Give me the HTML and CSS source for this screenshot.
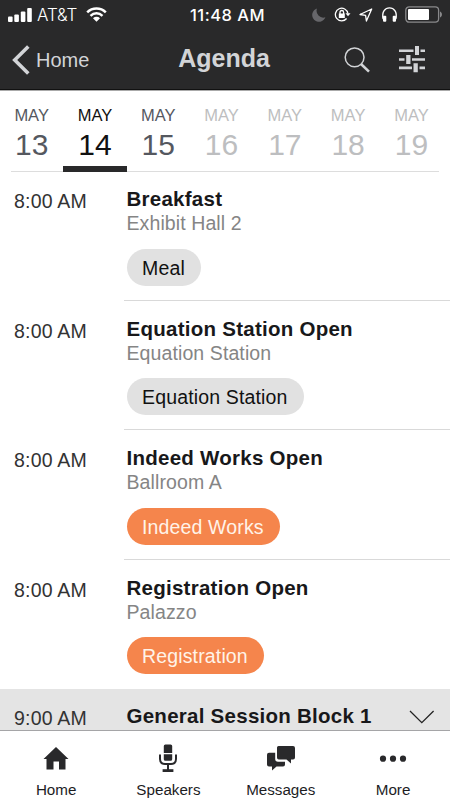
FILE: index.html
```
<!DOCTYPE html>
<html lang="en">
<head>
<meta charset="utf-8">
<title>Agenda</title>
<link rel="stylesheet" href="styles.css">
</head>
<body>
<div class="app">
  <header class="header">
    <div class="status">
      <div class="carrier">
        <svg width="25" height="14" viewBox="0 0 25 14" fill="#fff"><rect x="0" y="8.5" width="4.6" height="5.5" rx="1"/><rect x="6.3" y="6.5" width="4.6" height="7.5" rx="1"/><rect x="12.8" y="3.5" width="4.6" height="10.5" rx="1"/><rect x="19.2" y="0" width="4.6" height="14" rx="1"/></svg>
        <span class="carrier-name">AT&amp;T</span>
        <svg class="wifi" width="21" height="15" viewBox="0 0 21 15" fill="none" stroke="#fff" stroke-width="2.5"><path d="M1.2 5.3C6.4.2 14.6.2 19.8 5.3M4.5 8.8C8 5.5 13 5.5 16.5 8.8"/><path d="M7 11.2C9 9.4 12 9.4 14 11.2L10.5 14.8Z" fill="#fff" stroke="none"/></svg>
      </div>
      <span class="clock">11:48 AM</span>
      <div class="indicators">
        <svg width="14" height="14" viewBox="0 0 14 14" fill="#66666a"><path d="M5 .5A6.8 6.8 0 1 0 13.4 9.3A6.8 6.8 0 0 1 5 .5Z"/></svg>
        <svg class="lock" width="17" height="15" viewBox="0 0 17 15" fill="none" stroke="#fff" stroke-width="1.3"><path d="M12.6 11.5A6.3 6.3 0 1 1 13.9 6.5"/><path d="M11.5 6.2H16.5L14 9.2Z" fill="#fff" stroke="none"/><rect x="4.8" y="6.5" width="6" height="4.5" fill="#fff" stroke="none"/><path d="M6 7V5.3A1.8 1.8 0 0 1 9.6 5.3V7"/></svg>
        <svg class="location" width="14" height="14" viewBox="0 0 14 14" fill="none" stroke="#fff" stroke-width="1.3" stroke-linejoin="round"><path d="M12.7 1L1 6.5L6.6 7.4L7.4 13Z"/></svg>
        <svg class="headphones" width="17" height="15" viewBox="0 0 17 15"><path d="M2.2 12C-1.5-2.8 18.5-2.8 14.8 12" fill="none" stroke="#fff" stroke-width="1.4"/><rect x="2" y="8.7" width="3.3" height="6" rx="1" fill="#fff"/><rect x="11.7" y="8.7" width="3.3" height="6" rx="1" fill="#fff"/></svg>
        <svg class="battery" width="38" height="17" viewBox="0 0 38 17"><rect x=".8" y=".8" width="32.8" height="15.4" rx="3.4" fill="none" stroke="#89898b" stroke-width="1.3"/><rect x="3" y="3" width="21" height="11" rx="1" fill="#fff"/><path d="M35 5.5C37.6 6.3 37.6 10.7 35 11.5Z" fill="#89898b"/></svg>
      </div>
    </div>
    <nav class="navbar">
      <a class="back">
        <svg width="18" height="30" viewBox="0 0 18 30" fill="none" stroke="#d2d4d7" stroke-width="3.6"><path d="M16.3 1.5L2.7 15L16.3 28.5"/></svg>
        <span>Home</span>
      </a>
      <h1 class="title">Agenda</h1>
      <div class="actions">
        <svg width="26" height="26" viewBox="0 0 26 26" fill="none" stroke="#d2d4d7"><circle cx="10.6" cy="10.3" r="9.4" stroke-width="1.5"/><path d="M17 17L25 24.6" stroke-width="2.6"/></svg>
        <svg width="27" height="27" viewBox="0 0 27 27" fill="#d2d4d7"><path d="M0 3.4H14.5V6H0ZM21.5 3.4H26V6H21.5ZM16 0H20V9H16ZM0 12.2H5.5V14.8H0ZM13 12.2H26V14.8H13ZM7.2 9H11.5V18H7.2ZM0 20.6H13V23.2H0ZM20.5 20.6H26V23.2H20.5ZM14.5 17.3H18.8V26.2H14.5Z"/></svg>
      </div>
    </nav>
  </header>

  <section class="days">
    <div class="day"><span class="month">MAY</span><span class="date">13</span></div>
    <div class="day selected"><span class="month">MAY</span><span class="date">14</span></div>
    <div class="day"><span class="month">MAY</span><span class="date">15</span></div>
    <div class="day off"><span class="month">MAY</span><span class="date">16</span></div>
    <div class="day off"><span class="month">MAY</span><span class="date">17</span></div>
    <div class="day off"><span class="month">MAY</span><span class="date">18</span></div>
    <div class="day off"><span class="month">MAY</span><span class="date">19</span></div>
  </section>

  <main class="agenda">
    <article class="session">
      <time>8:00 AM</time>
      <div class="details"><h2>Breakfast</h2><p>Exhibit Hall 2</p><span class="tag">Meal</span></div>
    </article>
    <article class="session">
      <time>8:00 AM</time>
      <div class="details"><h2>Equation Station Open</h2><p>Equation Station</p><span class="tag">Equation Station</span></div>
    </article>
    <article class="session">
      <time>8:00 AM</time>
      <div class="details"><h2>Indeed Works Open</h2><p>Ballroom A</p><span class="tag orange">Indeed Works</span></div>
    </article>
    <article class="session">
      <time>8:00 AM</time>
      <div class="details"><h2>Registration Open</h2><p>Palazzo</p><span class="tag orange">Registration</span></div>
    </article>
    <article class="session block">
      <time>9:00 AM</time>
      <div class="details"><h2>General Session Block 1</h2></div>
      <svg class="chevron" width="26" height="14" viewBox="0 0 26 14" fill="none" stroke="#222" stroke-width="1.3"><path d="M1 1L12.8 12.7L24.6 1"/></svg>
    </article>
  </main>

  <footer class="tabs">
    <a class="tab">
      <svg width="26" height="30" viewBox="0 0 26 30" fill="#29292b"><path d="M13 4L25.5 16H22.5V26.5H16V18.5H10.5V26.5H3.5V16H.5Z"/></svg>
      <span>Home</span>
    </a>
    <a class="tab">
      <svg width="20" height="30" viewBox="0 0 20 30"><path d="M5.8 3Q5.8 1.4 7.4 1.4H12.6Q14.2 1.4 14.2 3V10H5.8ZM5.8 11.2H14.2V16.3Q14.2 17.8 12.6 17.8H7.4Q5.8 17.8 5.8 16.3Z" fill="#29292b"/><path d="M2 11.5V16Q2 20.9 7 20.9H13Q18 20.9 18 16V11.5M10 21V27.5" fill="none" stroke="#29292b" stroke-width="2"/><path d="M4.6 26.2H15.4V29H4.6Z" fill="#29292b"/></svg>
      <span>Speakers</span>
    </a>
    <a class="tab">
      <svg width="30" height="30" viewBox="0 0 30 30" fill="#29292b"><path d="M12.5 3H27Q29 3 29 5V14.5Q29 16.5 27 16.5H25V20.5L20.5 16.5H12.8Q11 16.5 11 14.5V4.5Q11 3 12.5 3ZM3 9.8H9.2V16Q9.2 18.7 12 18.7H19V21.5Q19 23.5 17 23.5H10.5L6 27.5V23.5H3Q1 23.5 1 21.5V11.8Q1 9.8 3 9.8Z"/></svg>
      <span>Messages</span>
    </a>
    <a class="tab">
      <svg width="28" height="30" viewBox="0 0 28 30" fill="#29292b"><circle cx="4" cy="15.7" r="3.1"/><circle cx="14" cy="15.7" r="3.1"/><circle cx="24" cy="15.7" r="3.1"/></svg>
      <span>More</span>
    </a>
  </footer>
</div>
</body>
</html>
```

FILE: styles.css
```
* { box-sizing: border-box; margin: 0; padding: 0; }
svg { display: block; flex: none; }
body { font-family: "Liberation Sans", Arial, sans-serif; background: #fff; overflow: hidden; }
.app { width: 450px; height: 800px; display: flex; flex-direction: column; overflow: hidden; }

.header { height: 91px; flex: none; background: #29292a; border-bottom: 1px solid #aaa; box-shadow: inset 0 -1px #111; }
.status { height: 29px; display: grid; grid-template-columns: 170px 1fr 170px; align-items: center; color: #fff; font-family: Inter, sans-serif; }
.carrier { display: flex; align-items: center; padding-left: 8px; }
.carrier-name { font-size: 17px; font-weight: 300; margin-left: 4px; width: 41px; letter-spacing: -.1px; white-space: nowrap; }
.wifi { margin-left: 8px; }
.clock { font-size: 16.5px; font-weight: 500; text-align: center; letter-spacing: .5px; padding-left: 5px; white-space: nowrap; }
.indicators { display: flex; align-items: center; justify-content: flex-end; padding-right: 7px; }
.indicators svg:first-child { margin-left: 0; }
.lock { margin-left: 8px; }
.location { margin-left: 8px; }
.headphones { margin-left: 8px; }
.battery { margin-left: 7px; }

.navbar { height: 61px; display: grid; grid-template-columns: 150px 1fr 150px; align-items: center; color: #d2d4d7; }
.back { display: flex; align-items: center; gap: 6px; padding-left: 12px; font-size: 20px; }
.back span { padding-top: 2px; }
.title { font-size: 25px; font-weight: bold; text-align: center; margin: -2px 2px 0 0; }
.actions { display: flex; align-items: center; justify-content: flex-end; gap: 29px; padding-right: 24px; }

.days { height: 81px; flex: none; display: grid; grid-template-columns: repeat(7, 63.3px); position: relative; }
.days::after { content: ""; position: absolute; left: 11px; right: 11px; bottom: 0; height: 1px; background: #ddd; z-index: -1; }
.day { display: flex; flex-direction: column; align-items: center; color: #55585f; padding-top: 13.5px; }
.month { font-size: 16.5px; line-height: 20px; }
.date { font-size: 30px; line-height: 39px; }
.selected { color: #111; border-bottom: 6px solid #29292a; }
.off { color: #bdbec0; }

.agenda { flex: 1; overflow: hidden; margin-top: -1px; }
.session { height: 129.5px; display: flex; padding-top: 16px; }
time { width: 124px; flex: none; padding-left: 14px; padding-top: 2px; font-size: 19.5px; line-height: 24px; letter-spacing: .2px; color: #333; }
.details { flex: 1; height: 113.5px; padding-left: 2.5px; border-bottom: 1px solid #d9d9d9; }
h2 { font-size: 20.5px; line-height: 24px; letter-spacing: .26px; color: #18181a; white-space: nowrap; }
p { font-size: 19.5px; line-height: 24px; letter-spacing: .1px; color: #858585; }
.tag { display: inline-block; margin-top: 13.5px; height: 37px; border-radius: 18.5px; padding: 0 16px 0 15.5px; font-size: 19.5px; line-height: 38px; letter-spacing: .15px; color: #111; background: #e1e1e1; }
.orange { background: #f5854c; color: #fff3e8; }
.session:nth-child(4) .details { border-bottom: 0; }
.block { background: #e4e4e4; padding-top: 15px; }
.block .details { border: 0; }
.chevron { margin: 6px 15px 0 0; }

.tabs { height: 70px; flex: none; display: grid; grid-template-columns: repeat(4, 112.3px); border-top: 1px solid #a5a5a7; background: #fff; }
.tab { display: flex; flex-direction: column; align-items: center; padding-top: 12px; font-size: 15.2px; line-height: 20px; color: #1d1d1f; }
.tab span { margin-top: 7px; }
```
